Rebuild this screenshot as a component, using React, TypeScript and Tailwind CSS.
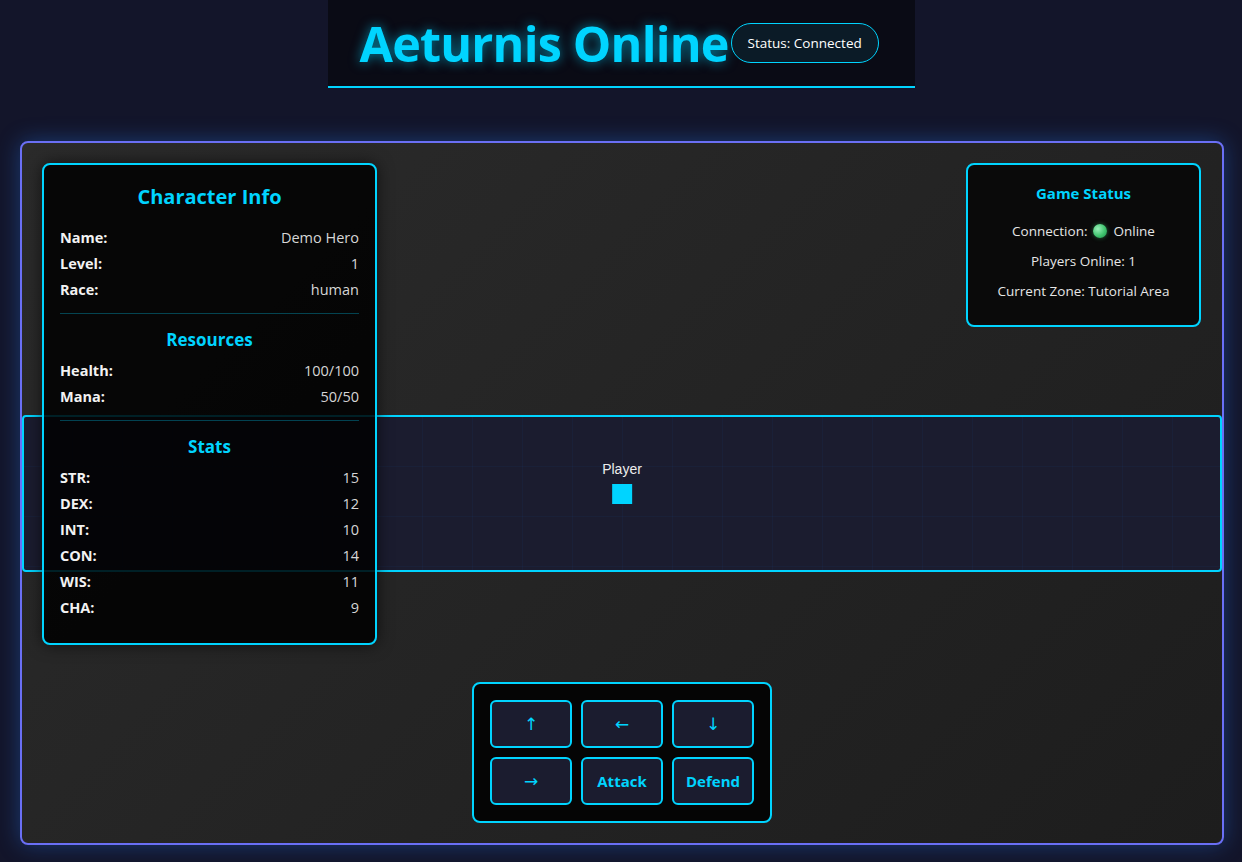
import React from 'react';

const charRows = [
  ['Name:', 'Demo Hero'],
  ['Level:', '1'],
  ['Race:', 'human'],
];

const resourceRows = [
  ['Health:', '100/100'],
  ['Mana:', '50/50'],
];

const statRows = [
  ['STR:', '15'],
  ['DEX:', '12'],
  ['INT:', '10'],
  ['CON:', '14'],
  ['WIS:', '11'],
  ['CHA:', '9'],
];

const moves = ['↑', '←', '↓', '→'];
const actions = ['Attack', 'Defend'];

function Row({ label, value }: { label: string; value: string }) {
  return (
    <div className="flex justify-between py-1 text-[14.5px] leading-[18px]">
      <span className="font-bold text-[#f2f2f2]">{label}</span>
      <span className="text-[#d6d6d6]">{value}</span>
    </div>
  );
}

const btn =
  'flex items-center justify-center rounded-md border-2 border-[#00d4ff] bg-[#1b1c2f] font-bold text-[#00d4ff]';

export default function App() {
  return (
    <div
      className="h-[862px] overflow-hidden bg-[#13152a] text-white"
      style={{ fontFamily: '"Open Sans", "Noto Sans", sans-serif' }}
    >
      {/* Header */}
      <header className="mx-auto flex h-[88px] w-[587px] items-center border-b-2 border-[#00d4ff] bg-[#0a0b15] px-8">
        <h1 className="shrink-0 whitespace-nowrap text-[48.5px] leading-none font-bold tracking-[-0.8px] text-[#00d4ff] [text-shadow:0_0_12px_rgba(0,212,255,0.6)]">
          Aeturnis Online
        </h1>
        <div className="ml-0.5 flex h-10 shrink-0 items-center whitespace-nowrap rounded-full border border-[#00d4ff] bg-[#0b1b27] px-4 text-[13.5px] text-white">
          Status: Connected
        </div>
      </header>

      {/* Game world */}
      <main className="relative mt-[53px] ml-5 mr-[18px] flex h-[704px] items-center rounded-lg border-2 border-[#6a6ff5] bg-[linear-gradient(135deg,#2b2b2b,#1d1d1d)] shadow-[0_0_22px_rgba(40,130,255,0.35)]">
        {/* canvas */}
        <div className="relative h-[157px] w-full rounded-[4px] border-2 border-[#00d4ff] bg-[#1b1c2f] bg-[linear-gradient(rgba(0,120,255,0.045)_1px,transparent_1px),linear-gradient(90deg,rgba(0,120,255,0.045)_1px,transparent_1px)] bg-[size:50px_50px] bg-[position:-2px_-1px]">
          <div className="absolute top-[44px] left-1/2 flex -translate-x-1/2 flex-col items-center">
            <span
              className="text-[14px] leading-4 text-[#ececec]"
              style={{ fontFamily: '"Liberation Sans", Arial, sans-serif' }}
            >
              Player
            </span>
            <div className="mt-[7px] h-5 w-5 bg-[#00d4ff]" />
          </div>
        </div>

        {/* Character info */}
        <section className="absolute top-5 left-5 w-[335px] rounded-lg border-2 border-[#00d4ff] bg-black/85 px-4 pt-5 pb-[22px] shadow-[0_0_16px_rgba(0,0,0,0.6)]">
          <h2 className="mb-4 text-center text-[20px] leading-6 font-bold text-[#00d4ff]">Character Info</h2>
          {charRows.map(([l, v]) => (
            <Row key={l} label={l} value={v} />
          ))}
          <div className="mt-2.5 h-px bg-[rgba(0,212,255,0.3)]" />
          <h3 className="mt-4 mb-2 text-center text-[17px] leading-5 font-bold text-[#00d4ff]">Resources</h3>
          {resourceRows.map(([l, v]) => (
            <Row key={l} label={l} value={v} />
          ))}
          <div className="mt-2.5 h-px bg-[rgba(0,212,255,0.3)]" />
          <h3 className="mt-4 mb-2 text-center text-[17px] leading-5 font-bold text-[#00d4ff]">Stats</h3>
          {statRows.map(([l, v]) => (
            <Row key={l} label={l} value={v} />
          ))}
        </section>

        {/* Game status */}
        <section className="absolute top-5 right-[21px] w-[235px] rounded-lg border-2 border-[#00d4ff] bg-[#0a0a0a] px-4 pt-[19px] pb-[19px] text-center">
          <h3 className="mb-[14px] text-[15px] leading-[18px] font-bold text-[#00d4ff]">Game Status</h3>
          <div className="flex h-[30px] items-center justify-center gap-1.5 text-[13.5px] text-[#e6e6e6]">
            Connection:
            <span className="inline-block h-[14px] w-[14px] rounded-full bg-[radial-gradient(circle_at_35%_35%,#9af0b8,#3fc46e_55%,#1f8a48)] shadow-[0_0_4px_rgba(60,200,110,0.5)]" />
            Online
          </div>
          <div className="flex h-[30px] items-center justify-center text-[13.5px] text-[#e6e6e6]">Players Online: 1</div>
          <div className="flex h-[30px] items-center justify-center text-[13.5px] text-[#e6e6e6]">Current Zone: Tutorial Area</div>
        </section>

        {/* Controls */}
        <section className="absolute bottom-5 left-1/2 -translate-x-1/2 rounded-lg border-2 border-[#00d4ff] bg-[#050505] p-4">
          <div className="grid grid-cols-[repeat(3,82px)] grid-rows-[repeat(2,48px)] gap-[9px]">
            {moves.map((c) => (
              <button
                key={c}
                className={`${btn} pt-0.5 text-[17px] font-normal`}
                style={{ fontFamily: '"DejaVu Sans", sans-serif' }}
              >
                {c}
              </button>
            ))}
            {actions.map((c) => (
              <button key={c} className={`${btn} text-[15px]`}>
                {c}
              </button>
            ))}
          </div>
        </section>
      </main>
    </div>
  );
}
